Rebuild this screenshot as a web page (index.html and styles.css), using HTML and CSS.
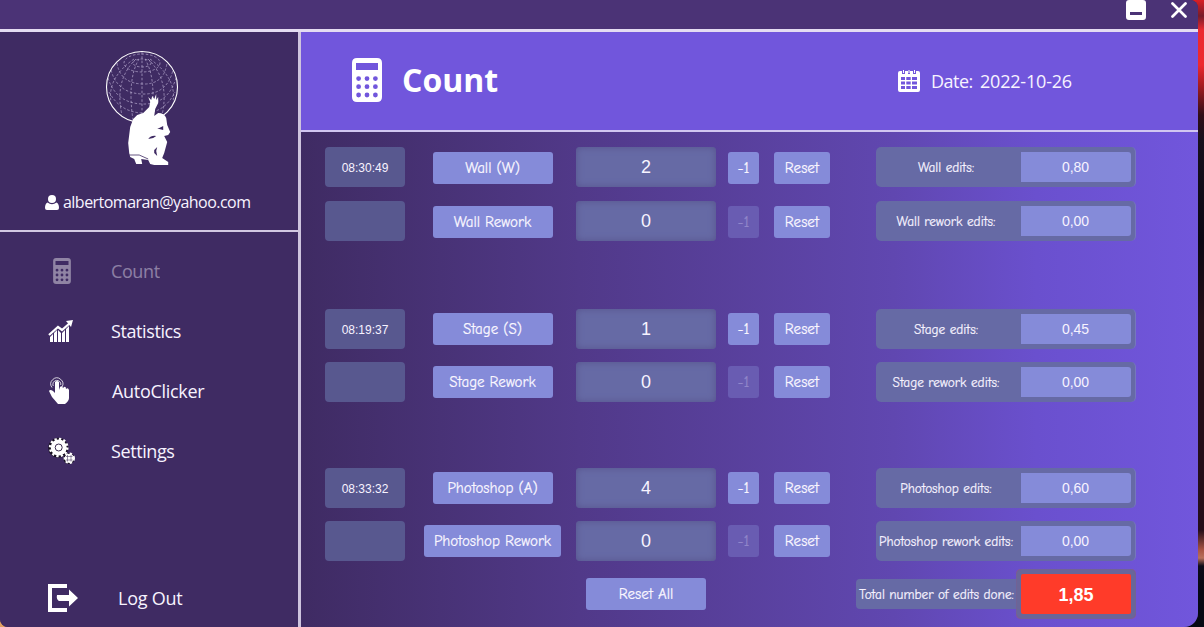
FILE: index.html
```html
<!DOCTYPE html>
<html lang="en">
<head>
<meta charset="utf-8">
<title>Count</title>
<link rel="stylesheet" href="styles.css">
</head>
<body>
<svg class="defs" aria-hidden="true">
  <symbol id="calc" viewBox="0 0 30 44">
    <path fill-rule="evenodd" d="M5 0H25Q30 0 30 5V39Q30 44 25 44H5Q0 44 0 39V5Q0 0 5 0ZM4 5V12H26V5ZM4.2 20.6a2.4 2.4 0 1 0 4.8 0a2.4 2.4 0 1 0 -4.8 0ZM12.6 20.6a2.4 2.4 0 1 0 4.8 0a2.4 2.4 0 1 0 -4.8 0ZM21 20.6a2.4 2.4 0 1 0 4.8 0a2.4 2.4 0 1 0 -4.8 0ZM4.2 28.7a2.4 2.4 0 1 0 4.8 0a2.4 2.4 0 1 0 -4.8 0ZM12.6 28.7a2.4 2.4 0 1 0 4.8 0a2.4 2.4 0 1 0 -4.8 0ZM21 28.7a2.4 2.4 0 1 0 4.8 0a2.4 2.4 0 1 0 -4.8 0ZM4.2 37a2.4 2.4 0 1 0 4.8 0a2.4 2.4 0 1 0 -4.8 0ZM12.6 37a2.4 2.4 0 1 0 4.8 0a2.4 2.4 0 1 0 -4.8 0ZM21 37a2.4 2.4 0 1 0 4.8 0a2.4 2.4 0 1 0 -4.8 0Z"/>
  </symbol>
</svg>
<div class="window">
  <header class="titlebar">
    <svg class="minimize" viewBox="0 0 20 20"><path fill-rule="evenodd" d="M3 0H17Q20 0 20 3V17Q20 20 17 20H3Q0 20 0 17V3Q0 0 3 0ZM4 12V15H16V12Z"/></svg>
    <svg class="close" viewBox="0 0 16 16"><path d="M1.5 1.5L14.5 14.5M14.5 1.5L1.5 14.5"/></svg>
  </header>
  <div class="body">
    <aside class="sidebar">
      <section class="profile">
        <svg class="logo" viewBox="0 0 74 116">
          <g class="globe">
            <circle class="rim" cx="37" cy="37" r="35.5"/>
            <ellipse cx="37" cy="13" rx="9" ry="4"/>
            <ellipse cx="37" cy="13" rx="18" ry="9"/>
            <path d="M12 13Q15 33 37 34T62 13M6 20Q12 43 37 44T68 20M3 28Q11 53 37 54T71 28M4 42Q15 62 37 63T70 42"/>
            <path d="M37 2V69M34 9Q22 29 28 70M40 9Q52 29 46 70M31 9Q9 30 17 65M43 9Q65 30 57 65M29 9Q2 28 6 52M45 9Q72 28 68 52"/>
          </g>
          <g transform="translate(-1.8 0)">
            <path class="figure" d="M46 57L47 52L45 47L48 50L49 46L51 49L53 44V50L55 47L55 53L52 59L51 66L46 71Q50 66 55 63Q61 63 63 68L64 75L67 82L65 85L61 86L64 92L61 103L59 108L65 112V115H51L47 114L45 110L38 109L39 114H33L31 109L27 107L26 103L25 93L27 77L30 69L34 65L40 63Z"/>
            <g class="folds"><path d="M54 79L60 76L60 80L56 79ZM45 89Q48 85 53 86L50 88ZM51 100L54 97L53 101L54 106L51 103Z"/><path class="fold-line" d="M26 105H36L45 109"/></g>
          </g>
        </svg>
        <div class="account">
          <svg class="user" viewBox="0 0 14 15"><circle cx="7" cy="4" r="4"/><path d="M2.5 7.5Q7 11 11.5 7.5Q14 8.5 14 13Q14 15 12 15H2Q0 15 0 13Q0 8.5 2.5 7.5Z"/></svg>
          <span>albertomaran@yahoo.com</span>
        </div>
      </section>
      <nav class="menu">
        <a class="item current"><span class="icon"><svg class="nav-calc"><use href="#calc"/></svg></span><span class="label">Count</span></a>
        <a class="item"><span class="icon"><svg class="chart" viewBox="0 0 25 23"><path d="M2 17L5 14V22H2ZM6 13L9 10V22H6ZM10 10L13 13V22H10ZM14 13L17 10V22H14ZM18 9L21 6V22H18Z"/><path class="trend" d="M1 15L10 7L14 10L22 3"/><path d="M18 1L25 0L23 7Z"/></svg></span><span class="label">Statistics</span></a>
        <a class="item"><span class="icon"><svg class="hand" viewBox="0 0 21 28"><path d="M6 5Q8 3 10 5V13L11 10Q13 8 14 11L15 10Q17 9 17 12Q19 10 20 13V21Q20 24 16 27H9L3 20L0 14Q1 12 4 14L6 16Z"/><path class="tap" d="M4.2 9A4 4 0 1 1 11.8 8M3 10.5A6 6 0 1 1 13 10"/></svg></span><span class="label auto">AutoClicker</span></a>
        <a class="item"><span class="icon"><svg class="gears" viewBox="0 0 27 28"><circle class="shadow" cx="10.2" cy="10.7" r="10"/><circle class="shadow" cx="21" cy="21.5" r="5.5"/><circle class="teeth" cx="10.7" cy="10.5" r="8.6"/><circle cx="10.7" cy="10.5" r="8"/><circle class="hub" cx="10.7" cy="10.5" r="3.5"/><circle class="teeth small" cx="21.3" cy="21.3" r="4.8"/><circle cx="21.3" cy="21.3" r="4.6"/><path class="cross" d="M19.5 18V24.5M23 18V24.5M18 19.5H24.5M18 23H24.5"/></svg></span><span class="label">Settings</span></a>
      </nav>
      <a class="logout">
        <svg viewBox="0 0 30 28"><path d="M0 0H19V4H4V24H19V28H0ZM9 11H21V5.5L30 14L21 22.5V17H11Q8 15 9 11Z"/></svg>
        <span>Log Out</span>
      </a>
    </aside>
    <main class="content">
      <header class="page-head">
        <svg class="head-calc"><use href="#calc"/></svg>
        <h1>Count</h1>
        <div class="date">
          <svg class="calendar" viewBox="0 0 22 22"><path fill-rule="evenodd" d="M2 1H4V4H7V1H10V4H12V1H15V4H18V1H20Q22 1 22 3V20Q22 22 20 22H2Q0 22 0 20V3Q0 1 2 1ZM3 7V10H7V7ZM8.3 7V10H12.7V7ZM14 7V10H19V7ZM3 11.5V14.5H7V11.5ZM8.3 11.5V14.5H12.7V11.5ZM14 11.5V14.5H19V11.5ZM3 16V19H7V16ZM8.3 16V19H12.7V16ZM14 16V19H19V16Z"/><path d="M5 0H6V3H5ZM10.5 0H11.5V3H10.5ZM16 0H17V3H16Z"/></svg>
          <span class="date-label">Date:</span><span class="date-value">2022-10-26</span>
        </div>
      </header>
      <section class="board">
        <div class="row top"><div class="time">08:30:49</div><button class="btn name">Wall (W)</button><div class="count">2</div><button class="btn">-1</button><button class="btn">Reset</button><div class="card"><span class="caption">Wall edits:</span><span class="value">0,80</span></div></div>
        <div class="row top second"><div class="time"></div><button class="btn name">Wall Rework</button><div class="count">0</div><button class="btn off">-1</button><button class="btn">Reset</button><div class="card"><span class="caption">Wall rework edits:</span><span class="value">0,00</span></div></div>
        <div class="row third"><div class="time">08:19:37</div><button class="btn name">Stage (S)</button><div class="count">1</div><button class="btn">-1</button><button class="btn">Reset</button><div class="card"><span class="caption">Stage edits:</span><span class="value">0,45</span></div></div>
        <div class="row fourth"><div class="time"></div><button class="btn name">Stage Rework</button><div class="count">0</div><button class="btn off">-1</button><button class="btn">Reset</button><div class="card"><span class="caption">Stage rework edits:</span><span class="value">0,00</span></div></div>
        <div class="row fifth"><div class="time">08:33:32</div><button class="btn name">Photoshop (A)</button><div class="count">4</div><button class="btn">-1</button><button class="btn">Reset</button><div class="card"><span class="caption">Photoshop edits:</span><span class="value">0,60</span></div></div>
        <div class="row fourth"><div class="time"></div><button class="btn name wide">Photoshop Rework</button><div class="count">0</div><button class="btn off">-1</button><button class="btn">Reset</button><div class="card"><span class="caption">Photoshop rework edits:</span><span class="value">0,00</span></div></div>
        <footer class="summary">
          <button class="btn all">Reset All</button>
          <div class="total"><span class="total-label">Total number of edits done:</span><span class="total-frame"><strong>1,85</strong></span></div>
        </footer>
      </section>
    </main>
  </div>
</div>
</body>
</html>
```
FILE: styles.css
```css
* { box-sizing: border-box; }
body {
  margin: 0; height: 627px; overflow: hidden; color: #f7f3ff;
  font-family: "Segoe UI", "Open Sans", "Noto Sans", sans-serif;
  background:
    linear-gradient(#e0a060, #e0a060) 0 100% / 10px 12px no-repeat,
    linear-gradient(#d91f25 0, #751c2b 16px, #eb2930 30px, #ed292e 65px, #a71c20 85px, #300d17 115px, #17101c 140px, #0b0713 240px, #241018 320px, #240d18 530px, #a95444 550px, #b8705c 558px, #0c0b18 566px, #060913 590px);
}
svg { display: block; fill: #fff; flex: none; }
.defs { position: absolute; width: 0; height: 0; }
.window { width: 1198px; height: 627px; overflow: hidden; border-radius: 0 8px 14px 8px; background: #3f2b63; }
.titlebar { height: 32px; background: #4b3376; border-bottom: 3px solid #e4dcf2; display: flex; justify-content: flex-end; align-items: flex-start; gap: 25px; padding-right: 11px; }
.minimize { width: 20px; height: 20px; }
.close { width: 16px; height: 16px; margin-top: 2px; stroke: #fff; stroke-width: 2.7; stroke-linecap: round; }
.body { display: flex; height: 595px; }
.sidebar { width: 301px; border-right: 3px solid #cec4de; background: #3f2b63; display: flex; flex-direction: column; }
.profile { height: 200px; border-bottom: 2px solid #d2c8e2; padding-top: 18px; }
.logo { width: 74px; height: 116px; margin-left: 105px; }
.globe { fill: none; stroke: #c1b5d8; stroke-width: .65; stroke-dasharray: 2.5 1.8; }
.globe .rim { stroke: #fff; stroke-width: 1.1; stroke-dasharray: none; }
.folds { fill: #3f2b63; }
.fold-line { fill: none; stroke: #3f2b63; stroke-width: .8; }
.account { display: flex; align-items: center; gap: 4px; height: 24px; margin: 24px 0 0 45px; font-size: 16px; letter-spacing: -.53px; white-space: nowrap; }
.user { width: 14px; height: 15px; }
.menu { padding-top: 9px; }
.item { height: 60px; display: flex; align-items: center; font-size: 18px; }
.icon { width: 63px; margin-left: 48px; }
.label { letter-spacing: -.4px; }
.auto { letter-spacing: -.3px; padding-left: 1px; }
.current { opacity: .42; }
.nav-calc { width: 18px; height: 26px; margin-left: 5px; }
.chart { width: 25px; height: 23px; }
.trend { fill: none; stroke: #fff; stroke-width: 2.3; }
.hand { width: 21px; height: 28px; margin-left: 1px; }
.tap { fill: none; stroke: #fff; stroke-width: .8; }
.gears { width: 27px; height: 28px; }
.shadow { fill: #171020; }
.teeth { fill: none; stroke: #fff; stroke-width: 2.5; stroke-dasharray: 2.3 2.2; }
.teeth.small { stroke-width: 1.8; }
.hub { fill: #fff; stroke: #3b2c50; stroke-width: 1; }
.cross { fill: none; stroke: #54486a; stroke-width: .6; }
.logout { display: flex; align-items: center; gap: 40px; margin: auto 0 14px 48px; height: 30px; font-size: 18px; letter-spacing: -.25px; }
.logout svg { width: 30px; height: 28px; }
.content { flex: 1; min-width: 0; }
.page-head { height: 100px; display: flex; align-items: center; background: #7156dc; border-bottom: 2px solid #d1c6f1; padding-left: 51px; }
.head-calc { width: 30px; height: 44px; margin-top: -2px; }
h1 { width: 110px; margin: -3px 0 0 20px; font-size: 32px; line-height: 44px; font-weight: 700; color: #fff; }
.date { display: flex; align-items: center; margin: -1px 0 0 386px; font-size: 18px; white-space: nowrap; }
.calendar { width: 22px; height: 22px; margin-top: 1px; }
.date-label { width: 49px; margin-left: 11px; letter-spacing: -.5px; }
.date-value { letter-spacing: -.2px; }
.board { height: 495px; padding: 15px 0 0 24px; background: linear-gradient(90deg, #3f2b63 0%, #513989 31%, #6047b0 66%, #6a50ce 82%, #7156dc 100%); }
.row { display: grid; height: 40px; grid-template-columns: 80px 19px 137px 15px 140px 12px 31px 15px 56px 46px 260px; align-items: center; }
.second { margin-top: 14px; }
.third { margin-top: 68px; }
.fourth { margin-top: 13px; }
.fifth { margin-top: 66px; }
.row > :nth-child(2) { grid-column: 3; justify-self: center; }
.row > :nth-child(3) { grid-column: 5; }
.row > :nth-child(4) { grid-column: 7; }
.row > :nth-child(5) { grid-column: 9; }
.row > :nth-child(6) { grid-column: 11; }
.time { height: 40px; border-radius: 4px; background: #58588f; font: 12px/42px "Liberation Sans", Arial, sans-serif; text-align: center; }
.btn { height: 32px; border: 0; border-radius: 3px; padding: 1px 0 0; margin: 0; background: #858bd9; color: #faf7ff; font: 15px/31px "Comic Sans MS", "Comic Neue", "Open Sans", sans-serif; -webkit-text-stroke: .2px currentColor; white-space: nowrap; }
.top .btn { margin-top: 2px; }
.name { width: 120px; }
.name.wide { width: 137px; }
.btn.off { background: #695cb2; color: #9186ca; }
.count { height: 40px; border-radius: 4px; background: #666aa5; box-shadow: inset 0 0 7px #57538d; font: 18px/41px "Liberation Sans", Arial, sans-serif; text-align: center; }
.card { height: 40px; border-radius: 5px; background: #666aa5; border-right: 1px solid #7577bd; display: flex; align-items: center; }
.caption, .total-label { font: 13.3px/41px "Comic Sans MS", "Comic Neue", "Open Sans", sans-serif; -webkit-text-stroke: .2px currentColor; white-space: nowrap; }
.caption { width: 145px; padding-right: 5px; display: flex; justify-content: center; }
.value { width: 110px; height: 30px; padding-right: 1px; border-radius: 0 3px 3px 0; background: #858bd9; font: 14px/31px "Liberation Sans", Arial, sans-serif; text-align: center; }
.summary { display: flex; height: 50px; margin-top: 8px; align-items: center; padding-left: 261px; }
.all { width: 120px; }
.total { display: flex; align-items: center; margin-left: 150px; }
.total-label { width: 160px; height: 30px; padding-left: 3px; border-radius: 4px 0 0 4px; background: #666aa5; line-height: 31px; }
.total-frame { display: block; width: 120px; height: 50px; padding: 5px; border-radius: 5px; background: #696699; box-shadow: inset 0 0 1px #c64170; }
.total-frame strong { display: block; height: 40px; border-radius: 2px; background: #ff3b29; font: bold 18px/42px "Liberation Sans", Arial, sans-serif; text-align: center; color: #fff; }
```
